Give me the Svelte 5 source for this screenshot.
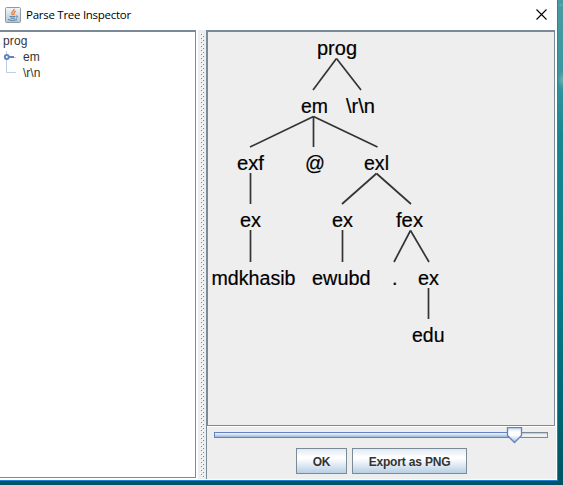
<script>
  const nodes = [
    ['prog', 317, 55, 40], ['em', 301, 113, 27], ['\\r\\n', 346, 113, 29],
    ['exf', 237, 170, 27], ['@', 305, 170, 20], ['exl', 364, 170, 25],
    ['ex', 240, 227, 21], ['ex', 332, 227, 21], ['fex', 396, 227, 27],
    ['mdkhasib', 211.5, 285, 84], ['ewubd', 312, 285, 58.5], ['.', 392, 285, 5.5],
    ['ex', 418, 285, 21], ['edu', 412, 342, 32.5]
  ];
  const edges = [
    [336.5, 58.5, 313, 90], [336.5, 58.5, 361, 90],
    [313.5, 116.5, 250, 147], [313.5, 116.5, 313.5, 147], [313.5, 116.5, 377.5, 147],
    [250.5, 173, 250.5, 204], [376.5, 173.5, 342, 204], [376.5, 173.5, 411, 204],
    [250.5, 230, 250.5, 262], [342.5, 230, 342.5, 262],
    [410.5, 230.5, 394, 262], [410.5, 230.5, 429, 262],
    [428.5, 288, 428.5, 319]
  ];
</script>

<div class="desktop">
  <div class="window">
    <header>
      <svg class="java" width="16" height="16" viewBox="0 0 16 16">
        <defs>
          <linearGradient id="tile" x1="0" y1="0" x2="0" y2="1">
            <stop offset="0" stop-color="#f4f6f8" /><stop offset="1" stop-color="#b4c5d2" />
          </linearGradient>
        </defs>
        <rect x=".5" y=".5" width="15" height="15" rx="1" fill="url(#tile)" stroke="#8b9dab" />
        <path d="M9 1.8C10 4 6 4.6 6.8 6.6L8 8.2M10.8 4C8.3 5 9.6 6.5 8.6 8" fill="none" stroke="#ee7c36" stroke-width="1.3" />
        <path d="M4.5 9.3Q7 10.2 10.5 9.3M5.5 11.2H10M3 12.5Q7 14.5 12 12.7M11 9Q14 9 11.2 11.2" fill="none" stroke="#5281a3" />
      </svg>
      <span class="title">Parse Tree Inspector</span>
      <svg class="close" width="11" height="11" viewBox="0 0 11 11">
        <path d="M.5 .5L10.5 10.5M10.5 .5L.5 10.5" stroke="#000" stroke-width="1.1" />
      </svg>
    </header>
    <main>
      <div class="outline">
        <div class="row root">prog</div>
        <div class="row">
          <svg width="23" height="16"><path d="M6.5 2V16" stroke="#b8cfe5" /><path d="M8 8H14" stroke="#6382bf" stroke-width="2" /><path d="M14 8.5H16" stroke="#b8cfe5" /><circle cx="6.8" cy="8" r="2" fill="#fff" stroke="#6382bf" stroke-width="1.9" /></svg><span>em</span>
        </div>
        <div class="row">
          <svg width="23" height="16"><path d="M6.5 0V7.5H16" fill="none" stroke="#b8cfe5" /></svg><span>\r\n</span>
        </div>
      </div>
      <div class="divider">
        <svg width="8" height="449">
          <defs>
            <pattern id="bumps" x="2" y="3" width="4" height="4" patternUnits="userSpaceOnUse">
              <rect width="1" height="1" fill="#fff" /><rect x="1" y="1" width="1" height="1" fill="#7a8a99" />
              <rect x="2" y="2" width="1" height="1" fill="#fff" /><rect x="3" y="3" width="1" height="1" fill="#7a8a99" />
            </pattern>
          </defs>
          <rect x="2" y="3" width="4" height="444" fill="url(#bumps)" />
        </svg>
      </div>
      <div class="viewer">
        <div class="canvas">
          <svg width="346" height="393" viewBox="208 32 346 393">
            {#each edges as [x1, y1, x2, y2]}
              <line {x1} {y1} {x2} {y2} />
            {/each}
            {#each nodes as [label, x, y, w]}
              <text {x} {y} textLength={w} lengthAdjust="spacingAndGlyphs">{label}</text>
            {/each}
          </svg>
        </div>
        <div class="slider">
          <svg width="347" height="18">
            <defs>
              <linearGradient id="thumb" x1="0" y1="0" x2="0" y2="1">
                <stop offset="0" stop-color="#c8dbed" /><stop offset=".3" stop-color="#fff" />
                <stop offset=".5" stop-color="#fff" /><stop offset="1" stop-color="#a3bfdc" />
              </linearGradient>
            </defs>
            <rect x="7.5" y="5.5" width="333" height="5" fill="#eee" stroke="#7a8a99" />
            <rect x="8" y="6" width="332" height="1" fill="#b8cfe5" />
            <rect x="7.5" y="5.5" width="300" height="5" fill="#b8cfe5" stroke="#6382bf" />
            <rect x="8" y="6" width="299" height="1" fill="#e4edf5" />
            <rect x="8" y="7" width="299" height="1" fill="#d5e2ef" />
            <rect x="8" y="9" width="299" height="1" fill="#a3bddb" />
            <path d="M300.5 .5H314.5V8.5L307.5 15.5L300.5 8.5Z" fill="url(#thumb)" stroke="#6382bf" stroke-width="1.3" />
          </svg>
        </div>
        <div class="buttons">
          <button class="ok"><span>OK</span></button>
          <button class="export"><span>Export as PNG</span></button>
        </div>
      </div>
    </main>
  </div>
</div>

<style>
  * { box-sizing: border-box; }
  svg { display: block; flex: none; }
  .desktop {
    width: 563px; height: 485px; overflow: hidden;
    background:
      radial-gradient(ellipse 3px 2px at 3px 5px, #8ab9b277, transparent) 558px 0 / 5px 13px no-repeat,
      radial-gradient(ellipse 4px 9px at 4px 20px, #a3c4ba88, transparent) 558px 60px / 5px 60px no-repeat,
      linear-gradient(#4a9ba3, #3a96a0 15%, #16878f 28%, #087d8b 60%, #00626f 88%, #005362);
  }
  .window {
    width: 558px; height: 481px; background: #fff; display: flex; flex-direction: column;
    border-right: 1px solid #1883d7; border-bottom: 1px solid #1883d7;
  }
  header { height: 30px; display: flex; align-items: center; padding: 0 10px 1px 5px; }
  .title { font: 11.5px "Open Sans", "Noto Sans", sans-serif; letter-spacing: -.27px; color: #000; margin-left: 5px; white-space: nowrap; }
  .close { margin-left: auto; }
  main { flex: 1; display: flex; padding-right: 1px; min-height: 0; }
  .outline {
    width: 196px; height: 448px; margin-right: 1px; border: solid #7a8a99; border-width: 2px 1px 1px 0;
    padding-top: 1px; font: 12px "Liberation Sans", Arial, sans-serif; color: #333;
  }
  .row { height: 16px; line-height: 16px; display: flex; }
  .root { padding-left: 3px; letter-spacing: .15px; }
  .divider { width: 9px; padding-left: 1px; }
  .divider svg { background: #eee; }
  .viewer { width: 350px; height: 449px; background: #eee; border-left: 1px solid #7a8a99; display: flex; flex-direction: column; }
  .canvas {
    width: 348px; height: 396px; border: solid #7a8a99; border-width: 2px 1px 1px 1px;
    box-shadow: 0 1px #fff, 1px 0 #fff;
  }
  line { stroke: #333; stroke-width: 1.7; }
  text { font: 20px "Liberation Sans", Arial, sans-serif; fill: #000; stroke: #000; stroke-width: .2px; }
  .slider { margin-top: 1px; height: 18px; }
  .buttons { display: flex; gap: 5px; padding: 3px 0 0 89px; }
  button {
    height: 26px; padding: 2px 0 0; border: 1px solid #7a8a99; color: #333;
    background: linear-gradient(#dfe9f3, #fff 32%, #fff 40%, #b8cfe5);
    font: bold 12px "Liberation Sans", Arial, sans-serif; letter-spacing: -.18px; white-space: nowrap;
  }
  .ok { width: 51px; }
  .export { width: 115px; }
</style>
